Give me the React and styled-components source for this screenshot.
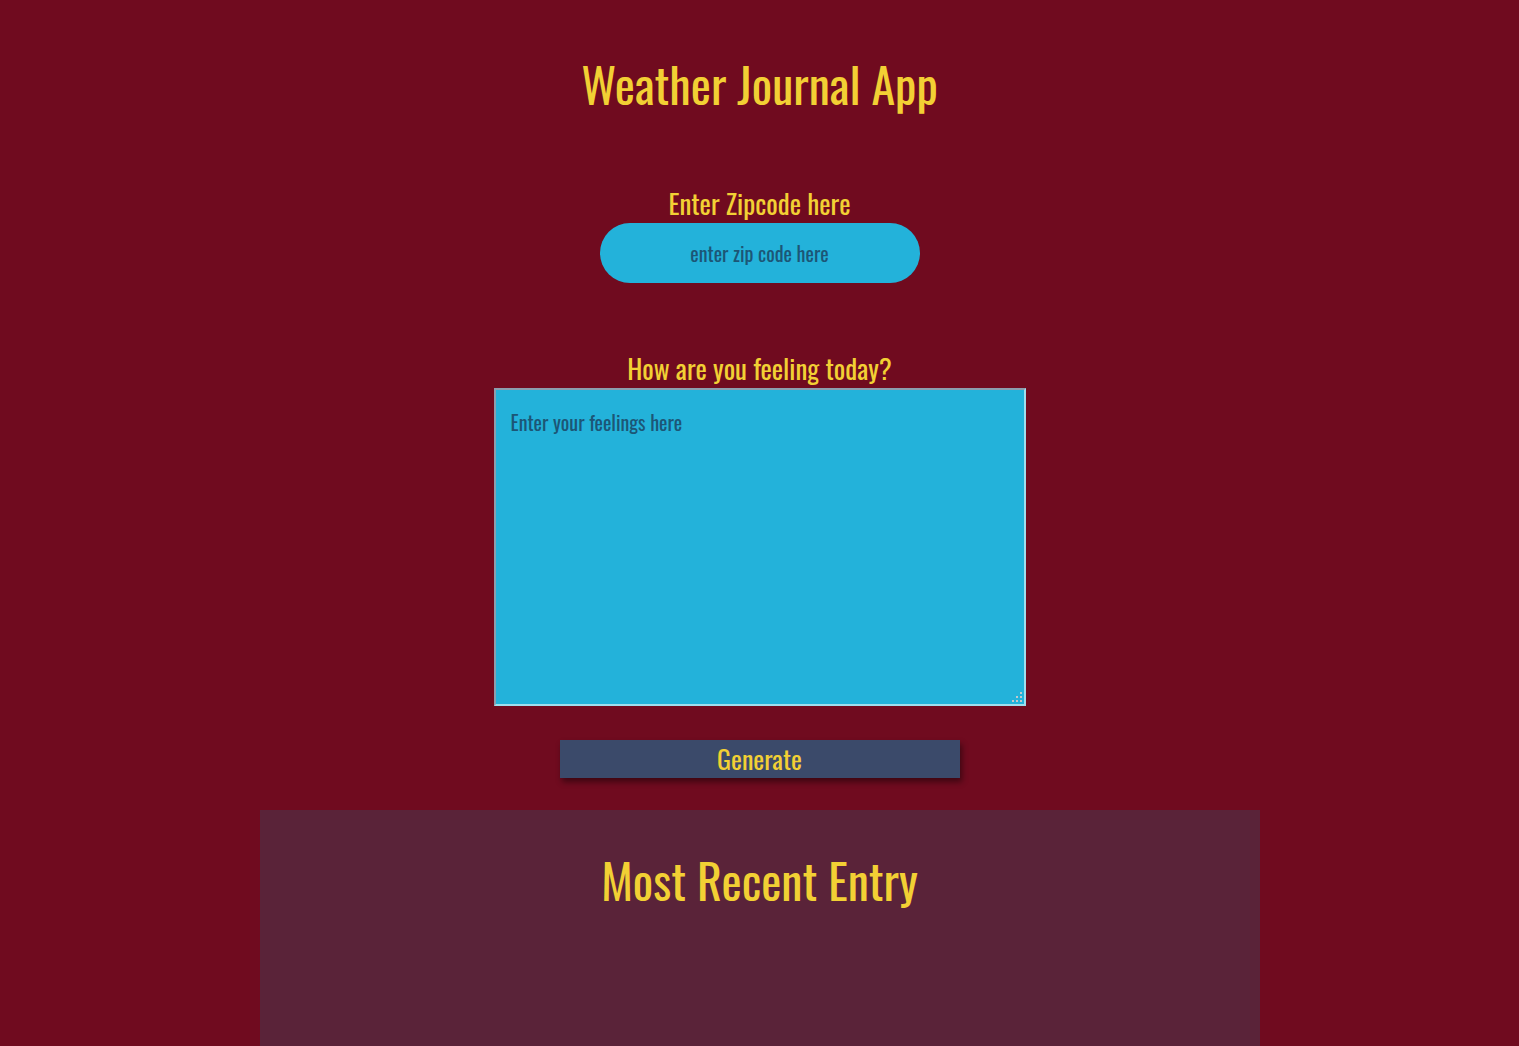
import React from "react";
import styled, { createGlobalStyle } from "styled-components";

const Global = createGlobalStyle`
  html, body { margin: 0; padding: 0; background: #700b1f; }
  body { font-family: 'Oswald', 'Liberation Sans Narrow', sans-serif; }
`;

const Page = styled.main`
  display: flex;
  flex-direction: column;
  align-items: center;
  min-height: 1046px;
  color: #f2d034;
`;

const Title = styled.h1`
  font-size: 48px;
  font-weight: 400;
  margin: 48px 0 0;
  line-height: 71px;
`;

const Field = styled.section`
  display: flex;
  flex-direction: column;
  align-items: center;
  margin-top: ${(p) => p.$top}px;
`;

const Label = styled.label`
  font-size: 27px;
  line-height: 36px;
  margin-bottom: 2px;
`;

const ZipInput = styled.input`
  box-sizing: border-box;
  width: 320px;
  height: 60px;
  border: none;
  border-radius: 30px;
  background: #23b2da;
  text-align: center;
  font-family: 'Oswald', sans-serif;
  font-size: 20px;
  color: #163f5c;
  outline: none;
  &::placeholder { color: #1c5676; }
`;

const AreaWrap = styled.div`
  position: relative;
  display: flex;
`;

const Feelings = styled.textarea`
  box-sizing: border-box;
  width: 532px;
  height: 318px;
  background: #23b2da;
  border: 2px solid #9fdfee;
  border-top-color: #8c9eae;
  border-left-color: #8c9eae;
  padding: 17px 15px;
  font-family: 'Oswald', sans-serif;
  font-size: 20px;
  color: #163f5c;
  outline: none;
  &::placeholder { color: #1c5676; }
  &::-webkit-resizer { background: transparent; }
`;

const Grip = styled.svg`
  position: absolute;
  right: 4px;
  bottom: 4px;
  width: 10px;
  height: 10px;
  pointer-events: none;
`;

const Button = styled.button`
  margin-top: 34px;
  width: 400px;
  height: 38px;
  border: none;
  background: #3b4a6a;
  color: #f2d034;
  font-family: 'Oswald', sans-serif;
  font-size: 26px;
  line-height: 38px;
  padding: 0;
  box-shadow: 2px 4px 6px rgba(0, 0, 0, 0.45);
  cursor: pointer;
`;

const Panel = styled.section`
  margin-top: 32px;
  width: 1000px;
  flex: 1;
  min-height: 236px;
  background: #5a2339;
  display: flex;
  flex-direction: column;
  align-items: center;
`;

const PanelTitle = styled.h2`
  font-size: 48px;
  font-weight: 400;
  margin: 34px 0 0;
  line-height: 71px;
`;

const dots = [
  [8, 0],
  [4, 4],
  [8, 4],
  [0, 8],
  [4, 8],
  [8, 8],
];

export default function App() {
  return (
    <Page>
      <Global />
      <Title>Weather Journal App</Title>
      <Field $top={66}>
        <Label htmlFor="zip">Enter Zipcode here</Label>
        <ZipInput id="zip" type="text" placeholder="enter zip code here" />
      </Field>
      <Field $top={67}>
        <Label htmlFor="feelings">How are you feeling today?</Label>
        <AreaWrap>
          <Feelings id="feelings" placeholder="Enter your feelings here" />
          <Grip viewBox="0 0 10 10" aria-hidden="true">
            {dots.map(([x, y]) => (
              <rect key={`${x}-${y}`} x={x} y={y} width="2" height="2" fill="#c3c9cc" />
            ))}
          </Grip>
        </AreaWrap>
      </Field>
      <Button type="button">Generate</Button>
      <Panel>
        <PanelTitle>Most Recent Entry</PanelTitle>
      </Panel>
    </Page>
  );
}
